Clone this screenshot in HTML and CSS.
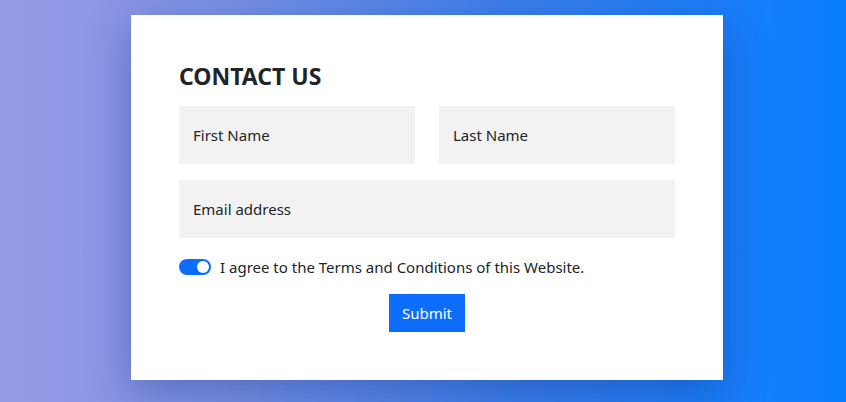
FILE: index.html
```html
<!DOCTYPE html>
<html lang="en">
<head>
<meta charset="utf-8">
<title>Contact Us</title>
<link rel="stylesheet" href="styles.css">
</head>
<body>
<div class="card">
  <h2 class="title">CONTACT US</h2>
  <form class="form">
    <div class="row">
      <input class="field" type="text" placeholder="First Name">
      <input class="field" type="text" placeholder="Last Name">
    </div>
    <input class="field" type="email" placeholder="Email address">
    <label class="agree">
      <span class="switch"><span class="knob"></span></span>
      <span class="agree-text">I agree to the Terms and Conditions of this Website.</span>
    </label>
    <div class="actions">
      <button class="submit" type="button">Submit</button>
    </div>
  </form>
</div>
</body>
</html>
```
FILE: styles.css
```css
* { box-sizing: border-box; }
html, body { margin: 0; height: 100%; }
body {
  width: 846px;
  height: 402px;
  overflow: hidden;
  background: linear-gradient(90deg, #979be6 0%, #7f92e4 25%, #3d7fec 60%, #077dff 100%);
  font-family: "Noto Sans", "Open Sans", sans-serif;
  color: #212529;
  padding: 15px 0 0 131px;
}
.card {
  width: 592px;
  height: 365px;
  background: #fff;
  padding: 48px;
  box-shadow: 0 12px 40px rgba(10, 40, 120, 0.35);
}
.title {
  margin: 0 0 17px;
  font-size: 23px;
  line-height: 26px;
  font-weight: 700;
  color: #212529;
}
.form { display: flex; flex-direction: column; gap: 16px; }
.row { display: flex; gap: 24px; }
.row .field { flex: 1; min-width: 0; }
.field {
  height: 58px;
  border: 0;
  background: #f2f2f2;
  padding: 0 14px;
  font: inherit;
  font-size: 15px;
  color: #212529;
  outline: none;
  width: 100%;
}
.field::placeholder { color: #212529; opacity: 1; }
.agree {
  display: flex;
  align-items: center;
  gap: 9px;
  margin-top: 2px;
  font-size: 15px;
  line-height: 22px;
}
.switch {
  width: 32px;
  height: 16px;
  border-radius: 8px;
  background: #0d6efd;
  display: flex;
  align-items: center;
  justify-content: flex-end;
  padding-right: 2px;
  flex: none;
}
.knob {
  width: 12px;
  height: 12px;
  border-radius: 50%;
  background: #fff;
}
.actions { display: flex; justify-content: center; }
.submit {
  height: 38px;
  padding: 0 12.5px;
  border: 0;
  border-radius: 0;
  background: #0d6efd;
  color: #fff;
  font: inherit;
  font-size: 15px;
}
```
